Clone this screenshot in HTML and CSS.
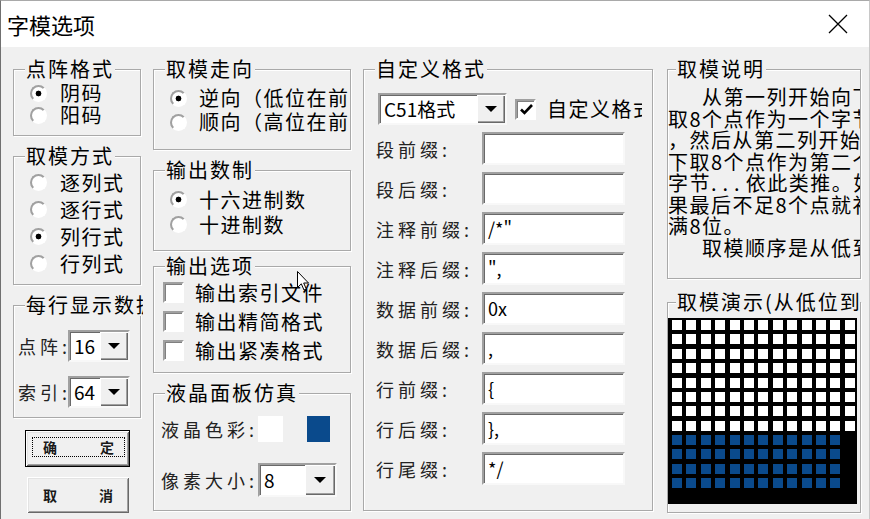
FILE: index.html
```html
<!DOCTYPE html>
<html lang="zh-CN">
<head>
<meta charset="UTF-8">
<meta name="viewport" content="width=device-width, initial-scale=1.0">
<title>字模选项</title>
<link rel="stylesheet" href="styles.css">
</head>
<body>

<div class="win">
  <div class="titlebar">
    <span class="title">字模选项</span>
    <span class="close"><svg width="20" height="20" viewBox="0 0 20 20"><path d="M1 1L19 19M19 1L1 19" stroke="#000" stroke-width="1.3" fill="none"/></svg></span>
  </div>

  <div class="dlg">
    <!-- 第一列 -->
    <div class="col col1">
      <fieldset class="grp g-dot">
        <legend>点阵格式</legend>
        <div class="opts">
          <div class="opt"><i class="radio on"></i>阴码</div>
          <div class="opt"><i class="radio"></i>阳码</div>
        </div>
      </fieldset>
      <fieldset class="grp g-mode">
        <legend>取模方式</legend>
        <div class="opts">
          <div class="opt"><i class="radio"></i>逐列式</div>
          <div class="opt"><i class="radio"></i>逐行式</div>
          <div class="opt"><i class="radio on"></i>列行式</div>
          <div class="opt"><i class="radio"></i>行列式</div>
        </div>
      </fieldset>
      <fieldset class="grp g-num">
        <legend>每行显示数据</legend>
        <div class="field f-dot"><span class="lbl">点阵:</span><div class="combo c-sm"><span class="val">16</span><span class="drop"><b></b></span></div></div>
        <div class="field f-idx"><span class="lbl">索引:</span><div class="combo c-sm"><span class="val">64</span><span class="drop"><b></b></span></div></div>
      </fieldset>
      <div class="btn btn-def"><span class="focus"><span>确</span><span>定</span></span></div>
      <div class="btn btn-cancel"><span>取</span><span>消</span></div>
    </div>

    <!-- 第二列 -->
    <div class="col col2">
      <fieldset class="grp g-dir">
        <legend>取模走向</legend>
        <div class="opts">
          <div class="opt"><i class="radio on"></i>逆向（低位在前）</div>
          <div class="opt"><i class="radio"></i>顺向（高位在前）</div>
        </div>
      </fieldset>
      <fieldset class="grp g-base">
        <legend>输出数制</legend>
        <div class="opts">
          <div class="opt"><i class="radio on"></i>十六进制数</div>
          <div class="opt"><i class="radio"></i>十进制数</div>
        </div>
      </fieldset>
      <fieldset class="grp g-out">
        <legend>输出选项</legend>
        <div class="opts">
          <div class="opt"><i class="chk"></i>输出索引文件</div>
          <div class="opt"><i class="chk"></i>输出精简格式</div>
          <div class="opt"><i class="chk"></i>输出紧凑格式</div>
        </div>
      </fieldset>
      <fieldset class="grp g-lcd">
        <legend>液晶面板仿真</legend>
        <div class="field f-color"><span class="lbl">液晶色彩:</span><i class="swatch sw-bg"></i><i class="swatch sw-fg"></i></div>
        <div class="field f-size"><span class="lbl">像素大小:</span><div class="combo c-px"><span class="val">8</span><span class="drop"><b></b></span></div></div>
      </fieldset>
    </div>

    <!-- 第三列 -->
    <div class="col col3">
      <fieldset class="grp g-fmt">
        <legend>自定义格式</legend>
        <div class="fmt-top">
          <div class="combo c-fmt"><span class="val">C51格式</span><span class="drop"><b></b></span></div>
          <i class="chk"><svg width="17" height="17" viewBox="0 0 17 17"><path d="M3 8.5L6.5 12L14 4" stroke="#000" stroke-width="2.6" fill="none"/></svg></i>
          <span class="chk-text">自定义格式</span>
        </div>
        <div class="fmt-rows">
          <span class="lbl">段前缀:</span><span class="txt"></span>
          <span class="lbl">段后缀:</span><span class="txt"></span>
          <span class="lbl">注释前缀:</span><span class="txt">/*"</span>
          <span class="lbl">注释后缀:</span><span class="txt">",</span>
          <span class="lbl">数据前缀:</span><span class="txt">0x</span>
          <span class="lbl">数据后缀:</span><span class="txt">,</span>
          <span class="lbl">行前缀:</span><span class="txt">{</span>
          <span class="lbl">行后缀:</span><span class="txt">},</span>
          <span class="lbl">行尾缀:</span><span class="txt">*/</span>
        </div>
      </fieldset>
    </div>

    <!-- 第四列 -->
    <div class="col col4">
      <fieldset class="grp g-note">
        <legend>取模说明</legend>
        <div class="note">
          <p class="ind">从第一列开始向下</p>
          <p>取8个点作为一个字节</p>
          <p>，然后从第二列开始向</p>
          <p>下取8个点作为第二个</p>
          <p>字节<span class="dots">...</span>依此类推。如</p>
          <p>果最后不足8个点就补</p>
          <p>满8位。</p>
          <p class="ind">取模顺序是从低到高</p>
        </div>
      </fieldset>
      <fieldset class="grp g-demo">
        <legend>取模演示(从低位到高位)</legend>
        <div class="lcd">
          <div class="lcd-off"></div>
          <div class="lcd-on"></div>
        </div>
      </fieldset>
    </div>
  </div>

  <svg class="cursor" width="13" height="21" viewBox="0 0 13 21"><path d="M0.5 0.5V16.5L4.3 12.8L7 19L9.3 18L6.7 12H11.5Z" fill="#fff" stroke="#000" stroke-width="1"/></svg>
</div>

</body>
</html>
```

FILE: styles.css
```css
* {margin:0; padding:0; box-sizing:border-box;}
body {width:870px; height:519px; overflow:hidden; background:#fff; font-family:"Noto Sans CJK SC", sans-serif; color:#000;}
i {display:block; font-style:normal;}

.win {position:relative; height:519px; border-top:1px solid #a9a9a9; border-left:1px solid #707070; border-right:1px solid #c8c8c8; display:flex; flex-direction:column;}
.titlebar {height:46px; flex:none; background:#fff; display:flex; align-items:center; justify-content:space-between; padding:0 21px 0 6px;}
.title {font-size:22px; line-height:1;}
.close svg {display:block;}
.cursor {position:absolute; left:296px; top:270px;}

.dlg {flex:1; background:#f0f0f0; display:flex; align-items:flex-start; padding:11px 0 0 12px;}
.col {display:flex; flex-direction:column; flex:none;}
.col1 {width:128px;}
.col2 {width:198px; margin-left:12px;}
.col3 {width:290px; margin-left:12px;}
.col4 {width:194px; margin-left:14px;}

/* 分组框 */
.grp {border:1px solid #a9a9a9; box-shadow:1px 1px 0 #fff, inset 1px 1px 0 #fff; min-width:0; min-inline-size:0;}
.grp legend {font-size:20px; letter-spacing:2px; line-height:22px; margin-left:11px; padding:0 1px; background:#f0f0f0; white-space:nowrap;}

.opt {display:flex; align-items:center; gap:13px; padding-left:16px; font-size:20px; line-height:22px; letter-spacing:1.5px; white-space:nowrap;}
.radio {flex:none; width:17px; height:17px; border-radius:50%; border:2px solid; border-color:#a0a0a0 #fff #fff #a0a0a0; background:#fff;}
.radio.on {background:radial-gradient(circle, #000 0 2.6px, #fff 3.2px);}
.chk {flex:none; width:21px; height:21px; border:2px solid; border-color:#a0a0a0 #fff #fff #a0a0a0; box-shadow:inset 1px 1px 0 #808080; background:#fff;}
.chk svg {display:block; margin:0 0 0 1px;}

.lbl {flex:none; font-size:18px; line-height:22px; letter-spacing:4px; color:#222; white-space:nowrap;}

/* 下拉框 / 文本框 */
.combo {display:flex; background:#fff; border:2px solid; border-color:#a0a0a0 #f8f8f8 #f8f8f8 #a0a0a0; box-shadow:inset 1px 1px 0 #696969;}
.combo .val {flex:1; padding:1px 0 0 4px; font-size:19px; line-height:26px; white-space:nowrap;}
.combo .drop {flex:none; width:28px; display:flex; align-items:center; justify-content:center; background:#f0f0f0; box-shadow:inset 1px 1px 0 #fff, inset -1px -1px 0 #696969, inset -2px -2px 0 #a0a0a0;}
.combo .drop b {width:0; height:0; border-left:6px solid transparent; border-right:6px solid transparent; border-top:6px solid #000;}
.txt {display:block; background:#fff; border:2px solid; border-color:#a0a0a0 #f8f8f8 #f8f8f8 #a0a0a0; box-shadow:inset 1px 1px 0 #696969; font-size:18px; line-height:29px; padding-left:4px; white-space:nowrap;}

/* 点阵格式 */
.g-dot {height:78px;}
.g-dot .opts {margin-top:2px;}
.g-dot .opt {height:22px;}

/* 取模方式 */
.g-mode {height:140px; margin-top:9px;}
.g-mode .opts {margin-top:2px;}
.g-mode .opt {height:27px;}

/* 每行显示数据 */
.g-num {height:124px; margin-top:9px;}
.g-num legend {max-width:118px; overflow-x:clip;}
.g-num .field {display:flex; align-items:center; padding-left:4px;}
.g-num .lbl {width:50px;}
.f-dot {margin-top:14px; height:32px;}
.f-idx {margin-top:13px; height:33px;}
.c-sm {width:62px; height:32px;}

/* 按钮 */
.btn {display:flex; align-items:center; justify-content:space-between; background:#f0f0f0; font-size:14px; font-weight:700; color:#1a1a1a; box-shadow:inset 1px 1px 0 #fff, inset -1px -1px 0 #696969, inset 2px 2px 0 #e3e3e3, inset -2px -2px 0 #a0a0a0;}
.btn-def {width:105px; height:37px; margin:12px 0 0 12px; border:1px solid #000; padding:6px 4px 9px 6px;}
.btn-def .focus {flex:1; align-self:stretch; display:flex; align-items:center; justify-content:space-between; border:1px dotted #000; padding:0 10px;}
.btn-cancel {width:102px; height:36px; margin:10px 0 0 14px; padding:0 16px;}

/* 取模走向 / 输出数制 */
.col2 .opt {padding-left:16px; gap:12px;}
.g-dir {height:92px;}
.g-dir .opts {margin-top:6px;}
.g-dir .opt {height:24px; overflow-x:clip;}
.g-base {height:92px; margin-top:9px;}
.g-base .opts {margin-top:6px;}
.g-base .opt {height:25px;}

/* 输出选项 */
.g-out {height:118px; margin-top:4px;}
.g-out .opts {margin-top:1px;}
.g-out .opt {height:29px; padding-left:9px; gap:11px;}

/* 液晶面板仿真 */
.g-lcd {height:129px; margin-top:9px;}
.g-lcd .field {display:flex; align-items:center; padding-left:7px;}
.g-lcd .lbl {width:97px;}
.f-color {margin-top:12px; height:26px;}
.f-size {margin-top:21px; height:34px;}
.swatch {width:25px; height:26px; background:#fff;}
.sw-fg {width:23px; margin-left:24px; background:#0a4a8c;}
.c-px {width:79px; height:34px;}
.c-px .val {line-height:28px;}
.c-px .drop {width:30px;}

/* 自定义格式 */
.g-fmt {height:453px;}
.fmt-top {display:flex; align-items:center; height:32px; margin-top:13px; padding-left:14px;}
.c-fmt {width:129px; height:32px;}
.fmt-top .chk {margin-left:8px;}
.chk-text {margin-left:11px; width:95px; overflow-x:clip; white-space:nowrap; font-size:20px; line-height:22px; letter-spacing:1.5px;}
.fmt-rows {display:grid; grid-template-columns:106px 143px; grid-auto-rows:33px; row-gap:7px; margin-top:7px; padding-left:12px;}
.fmt-rows .lbl {align-self:center;}

/* 取模说明 */
.col4 .grp legend {margin-left:8px;}
.g-note {height:221px;}
.note {margin-top:6px; font-size:20px; letter-spacing:1.5px; line-height:21.5px; white-space:nowrap; overflow-x:clip;}
.note .ind {padding-left:34px;}
.note .dots {letter-spacing:6px;}

/* 取模演示 */
.g-demo {height:222px; margin-top:12px;}
.g-demo legend {max-width:184px; overflow-x:clip;}
.lcd {width:189px; height:186px; margin-top:5px; background:#000; padding:2px 0 0 3.7px; overflow:hidden;}
.lcd-off, .lcd-on {background-image:repeating-linear-gradient(90deg, transparent 0 10px, #000 10px 14.4px), repeating-linear-gradient(180deg, transparent 0 10px, #000 10px 14.4px);}
.lcd-off {height:115.2px; background-color:#fff;}
.lcd-on {width:172.8px; height:57.6px; background-color:#0a4a8c;}
```
